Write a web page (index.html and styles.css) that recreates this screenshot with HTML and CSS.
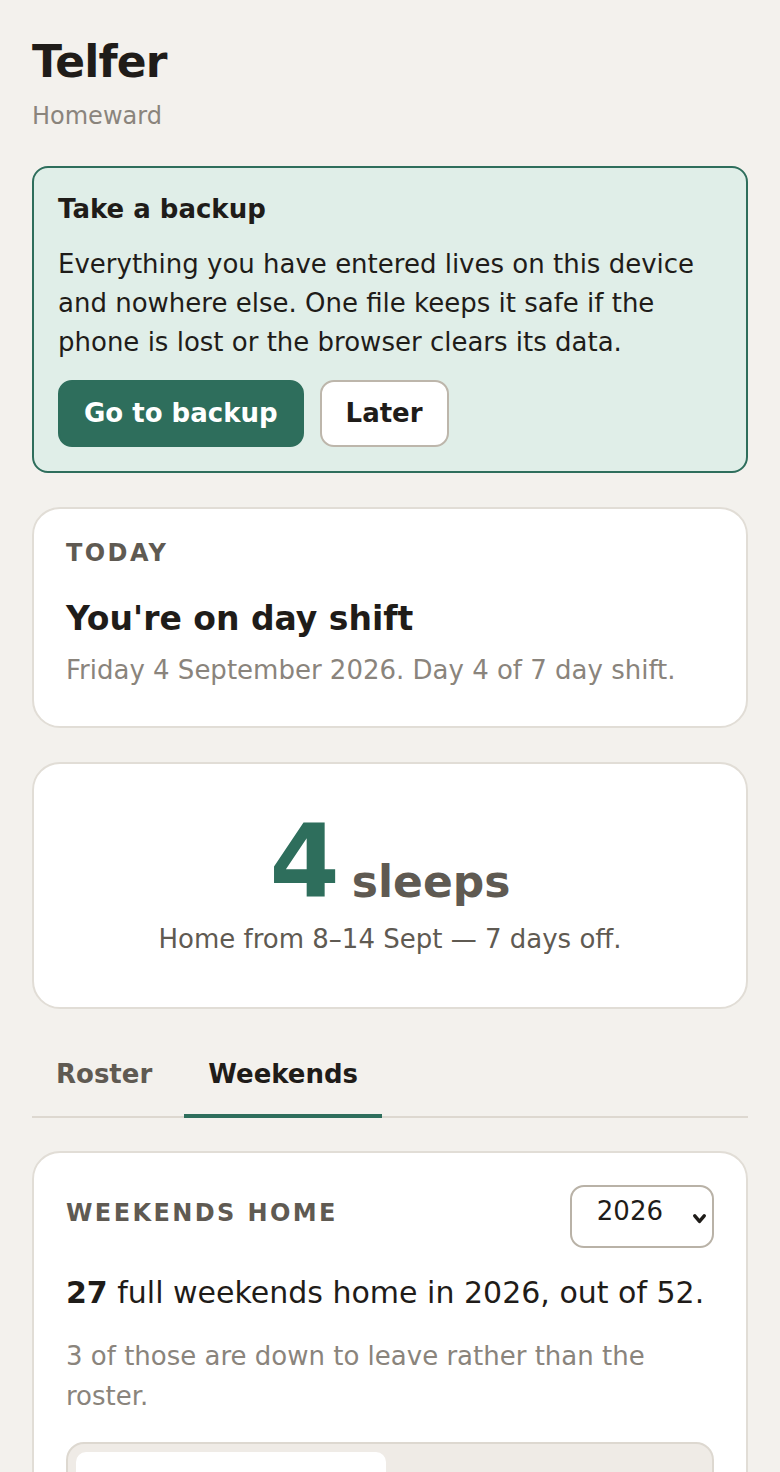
FILE: index.html
```html
<!DOCTYPE html>
<html lang="en">
<head>
<meta charset="utf-8">
<title>Telfer – Homeward</title>
<link rel="stylesheet" href="styles.css">
</head>
<body>
<main class="page">
  <header class="masthead">
    <h1 class="brand">Telfer</h1>
    <p class="tagline">Homeward</p>
  </header>

  <section class="card backup">
    <h2 class="backup-title">Take a backup</h2>
    <p class="backup-text">Everything you have entered lives on this device and nowhere else. One file keeps it safe if the phone is lost or the browser clears its data.</p>
    <div class="actions">
      <button class="btn btn-primary">Go to backup</button>
      <button class="btn btn-secondary">Later</button>
    </div>
  </section>

  <section class="card today">
    <p class="eyebrow">Today</p>
    <h2 class="today-title">You're on day shift</h2>
    <p class="muted">Friday 4 September 2026. Day 4 of 7 day shift.</p>
  </section>

  <section class="card countdown">
    <p class="count"><span class="count-num">4</span><span class="count-unit">sleeps</span></p>
    <p class="count-sub">Home from 8–14 Sept — 7 days off.</p>
  </section>

  <nav class="tabs">
    <button class="tab">Roster</button>
    <button class="tab tab-active">Weekends</button>
  </nav>

  <section class="card weekends">
    <div class="card-head">
      <h2 class="eyebrow head-label">Weekends home</h2>
      <div class="select">
        <span class="select-value">2026</span>
        <svg class="chevron" width="13" height="10" viewBox="0 0 13 10" aria-hidden="true"><path d="M1.8 1.8 L6.5 7.4 L11.2 1.8" fill="none" stroke="#1f1c19" stroke-width="3.4" stroke-linecap="round" stroke-linejoin="round"/></svg>
      </div>
    </div>
    <p class="stat"><strong>27</strong> full weekends home in 2026, out of 52.</p>
    <p class="muted muted-tall">3 of those are down to leave rather than the roster.</p>
    <div class="segmented">
      <button class="seg seg-active">List</button>
      <button class="seg">Calendar</button>
    </div>
  </section>
</main>
</body>
</html>
```

FILE: styles.css
```css
* { box-sizing: border-box; }

html, body {
  margin: 0;
  padding: 0;
  background: #f3f1ed;
}

body {
  font-family: "DejaVu Sans", "Noto Sans", sans-serif;
  color: #1f1c19;
  font-size: 26px;
  line-height: 39px;
}

p, h1, h2 { margin: 0; }

button {
  font-family: inherit;
  cursor: pointer;
}

.page {
  padding: 36px 32px 0;
}

.masthead {
  margin-bottom: 32px;
}

.brand {
  font-size: 44px;
  line-height: 1.2;
  font-weight: 700;
  letter-spacing: -0.02em;
  margin-bottom: 9px;
}

.tagline {
  font-size: 24px;
  line-height: 36px;
  color: #8a847c;
}

.card {
  background: #ffffff;
  border: 2px solid #e1ddd6;
  border-radius: 28px;
  margin-bottom: 34px;
}

/* Backup prompt */
.backup {
  background: #e0eee8;
  border-color: #2e6e5c;
  border-radius: 16px;
  padding: 24px;
}

.backup-title {
  font-size: 26px;
  line-height: 34px;
  font-weight: 700;
  margin-bottom: 19px;
}

.backup-text {
  margin-bottom: 18px;
}

.actions {
  display: flex;
  gap: 16px;
}

.btn {
  font-size: 26px;
  line-height: 39px;
  font-weight: 700;
  padding: 12px 24px;
  border-radius: 14px;
  border: 2px solid transparent;
}

.btn-primary {
  background: #2e6e5c;
  border-color: #2e6e5c;
  color: #ffffff;
}

.btn-secondary {
  background: #ffffff;
  border-color: #bdb6ab;
  color: #1f1c19;
}

/* Today */
.today {
  padding: 28px 32px 35.5px;
  margin-bottom: 34.5px;
}

.eyebrow {
  font-size: 24px;
  line-height: 33.6px;
  font-weight: 700;
  text-transform: uppercase;
  letter-spacing: 0.1em;
  color: #5f5a52;
}

.today-title {
  font-size: 33px;
  line-height: 41px;
  font-weight: 700;
  margin-top: 28px;
  margin-bottom: 12px;
}

.muted {
  color: #8a847c;
}

/* Countdown */
.countdown {
  padding: 48px 32px 48.5px;
  text-align: center;
}

.count {
  display: flex;
  justify-content: center;
  align-items: baseline;
  gap: 12px;
  line-height: 1;
}

.count-num {
  font-size: 101px;
  line-height: 100px;
  font-weight: 700;
  color: #2e6e5c;
}

.count-unit {
  font-size: 44px;
  line-height: 44px;
  font-weight: 700;
  color: #5f5a52;
}

.count-sub {
  margin-top: 7.5px;
  color: #5f5a52;
}

/* Tabs */
.tabs {
  display: flex;
  gap: 8px;
  border-bottom: 2px solid #ddd8d0;
  margin-bottom: 33px;
}

.tab {
  background: none;
  border: none;
  border-bottom: 4px solid transparent;
  margin-bottom: -2px;
  padding: 12px 24px 20px;
  font-size: 26px;
  line-height: 39px;
  font-weight: 700;
  color: #5f5a52;
}

.tab-active {
  color: #1f1c19;
  border-bottom-color: #2e6e5c;
}

/* Weekends */
.weekends {
  padding: 32px;
}

.card-head {
  display: flex;
  justify-content: space-between;
  align-items: flex-start;
}

.head-label {
  line-height: 36px;
  margin-top: 10px;
}

.select {
  display: flex;
  align-items: flex-start;
  gap: 30px;
  height: 63px;
  padding: 5px 6px 0 25px;
  border: 2px solid #b9b2a7;
  border-radius: 14px;
  background: #ffffff;
}

.select-value {
  font-size: 26px;
  line-height: 39px;
}

.chevron {
  align-self: center;
}

.stat {
  font-size: 30px;
  line-height: 42px;
  margin-top: 24px;
}

.stat strong {
  font-weight: 700;
}

.muted-tall {
  line-height: 40px;
  margin-top: 22px;
}

.segmented {
  display: grid;
  grid-template-columns: 1fr 1fr;
  gap: 8px;
  margin-top: 26px;
  padding: 8px;
  background: #efebe6;
  border: 2px solid #ddd8d0;
  border-radius: 18px;
}

.seg {
  background: transparent;
  border: none;
  border-radius: 10px;
  padding: 26px 16px;
  font-size: 26px;
  line-height: 39px;
  font-weight: 700;
  color: #5f5a52;
}

.seg-active {
  background: #ffffff;
  color: #1f1c19;
}
```
